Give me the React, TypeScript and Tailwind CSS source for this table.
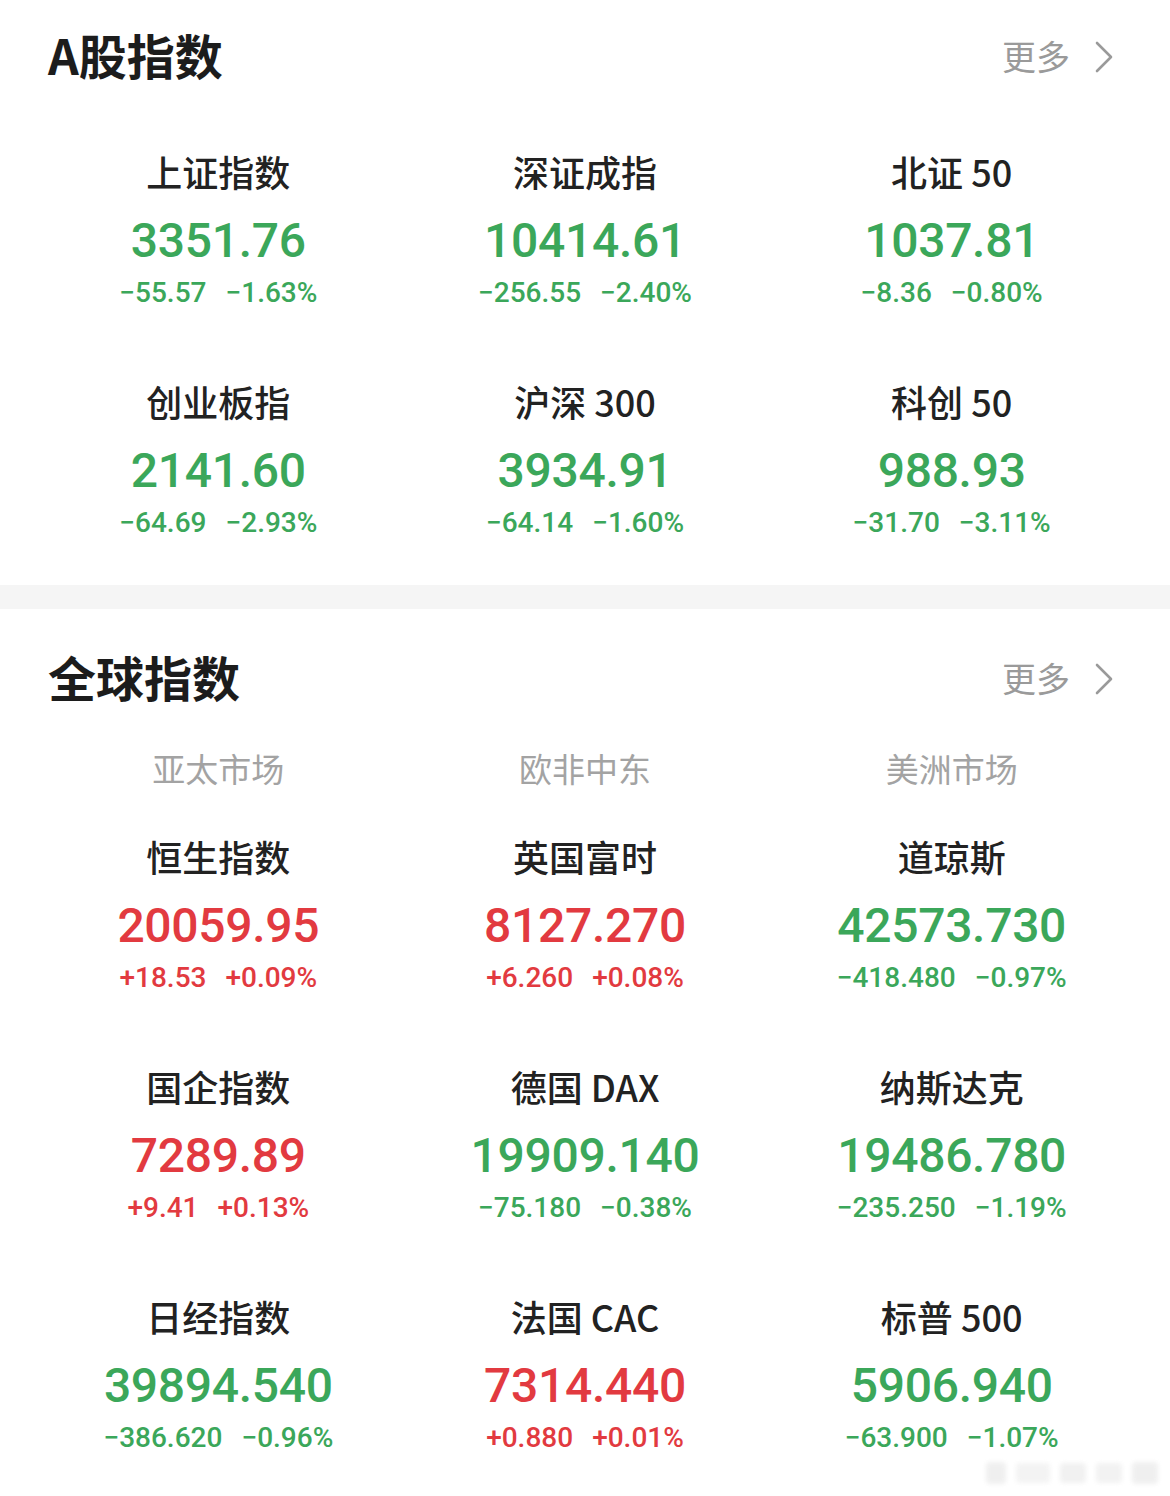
import React from 'react';

type Quote = {
  name: string;
  value: string;
  change: string;
  pct: string;
  up: boolean;
};

const aShares: Quote[] = [
  { name: '上证指数', value: '3351.76', change: '−55.57', pct: '−1.63%', up: false },
  { name: '深证成指', value: '10414.61', change: '−256.55', pct: '−2.40%', up: false },
  { name: '北证 50', value: '1037.81', change: '−8.36', pct: '−0.80%', up: false },
  { name: '创业板指', value: '2141.60', change: '−64.69', pct: '−2.93%', up: false },
  { name: '沪深 300', value: '3934.91', change: '−64.14', pct: '−1.60%', up: false },
  { name: '科创 50', value: '988.93', change: '−31.70', pct: '−3.11%', up: false },
];

const globalIdx: Quote[] = [
  { name: '恒生指数', value: '20059.95', change: '+18.53', pct: '+0.09%', up: true },
  { name: '英国富时', value: '8127.270', change: '+6.260', pct: '+0.08%', up: true },
  { name: '道琼斯', value: '42573.730', change: '−418.480', pct: '−0.97%', up: false },
  { name: '国企指数', value: '7289.89', change: '+9.41', pct: '+0.13%', up: true },
  { name: '德国 DAX', value: '19909.140', change: '−75.180', pct: '−0.38%', up: false },
  { name: '纳斯达克', value: '19486.780', change: '−235.250', pct: '−1.19%', up: false },
  { name: '日经指数', value: '39894.540', change: '−386.620', pct: '−0.96%', up: false },
  { name: '法国 CAC', value: '7314.440', change: '+0.880', pct: '+0.01%', up: true },
  { name: '标普 500', value: '5906.940', change: '−63.900', pct: '−1.07%', up: false },
];

const cjk = { fontFamily: '"Noto Sans CJK SC", "Noto Sans", sans-serif' };
const num = { fontFamily: 'Roboto, "Liberation Sans", sans-serif' };

function SectionHeader({ title }: { title: string }) {
  return (
    <div className="flex items-center justify-between h-16 pl-[48px] pr-[56px]">
      <h2 className="text-[48px] font-bold text-[#1c1c1c] leading-none pb-[6px]" style={cjk}>
        {title}
      </h2>
      <div className="flex items-center gap-[24px] text-[#9a9a9a]">
        <span className="text-[34px] leading-none pb-[2px]" style={cjk}>
          更多
        </span>
        <svg width="20" height="34" viewBox="0 0 20 34" fill="none">
          <path d="M3 3 L17 17 L3 31" stroke="#9a9a9a" strokeWidth="2.6" strokeLinecap="round" strokeLinejoin="round" />
        </svg>
      </div>
    </div>
  );
}

function QuoteCell({ q }: { q: Quote }) {
  const color = q.up ? 'text-[#e23a40]' : 'text-[#3ba75a]';
  return (
    <div className="flex flex-col items-center">
      <div className="text-[36px] leading-[52px] font-medium text-[#222] whitespace-pre" style={cjk}>
        {q.name}
      </div>
      <div className={`mt-[6px] text-[48px] leading-[76px] font-medium tracking-[-0.3px] ${color}`} style={num}>
        {q.value}
      </div>
      <div className={`flex gap-[19px] text-[28px] leading-[28px] font-medium ${color}`} style={num}>
        <span>{q.change}</span>
        <span>{q.pct}</span>
      </div>
    </div>
  );
}

export default function App() {
  return (
    <div className="w-[1170px] h-[1496px] bg-white relative overflow-hidden">
      <section className="h-[585px] pt-[25px]">
        <SectionHeader title="A股指数" />
        <div className="grid grid-cols-3 gap-y-[68px] px-[35px] mt-[56px]">
          {aShares.map((q) => (
            <QuoteCell key={q.name} q={q} />
          ))}
        </div>
      </section>

      <div className="h-[24px] bg-[#f5f5f5]" />

      <section className="pt-[38px]">
        <SectionHeader title="全球指数" />
        <div className="grid grid-cols-3 px-[35px] mt-[36px]">
          {['亚太市场', '欧非中东', '美洲市场'].map((t) => (
            <div key={t} className="text-center text-[33px] leading-[42px] text-[#a3a3a3]" style={cjk}>
              {t}
            </div>
          ))}
        </div>
        <div className="grid grid-cols-3 gap-y-[68px] px-[35px] mt-[41px]">
          {globalIdx.map((q) => (
            <QuoteCell key={q.name} q={q} />
          ))}
        </div>
      </section>

      {/* faint watermark */}
      <div className="absolute right-[12px] bottom-[12px] flex items-center gap-[10px] opacity-60 blur-[2px]">
        <div className="w-[20px] h-[22px] bg-[#e6e6e6] rounded-sm" />
        <div className="w-[34px] h-[20px] bg-[#ececec] rounded-sm" />
        <div className="w-[26px] h-[20px] bg-[#e8e8e8] rounded-sm" />
        <div className="w-[26px] h-[20px] bg-[#eaeaea] rounded-sm" />
        <div className="w-[26px] h-[22px] bg-[#e6e6e6] rounded-sm" />
      </div>
    </div>
  );
}
